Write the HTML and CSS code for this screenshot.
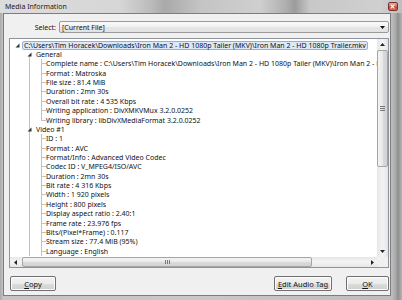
FILE: index.html
```html
<!DOCTYPE html>
<html>
<head>
<meta charset="utf-8">
<title>Media Information</title>
<link rel="stylesheet" href="styles.css">
</head>
<body>
<div class="window">
  <div class="titlebar">
    <span class="title">Media Information</span>
    <span class="close"><svg width="10" height="9" viewBox="0 0 10 9"><path d="M3 2.5 L7 6.5 M7 2.5 L3 6.5" stroke="#fff" stroke-width="1.3"/></svg></span>
  </div>
  <div class="client">
    <div class="select-row">
      <span class="select-label">Select:</span>
      <div class="combo">
        <span class="combo-text">[Current File]</span>
        <svg class="combo-arrow" width="5" height="3" viewBox="0 0 5 3"><polygon points="0,0 5,0 2.5,3" fill="#111"/></svg>
      </div>
    </div>
    <div class="panel">
      <div class="tree">
        <div class="row r0"><svg class="exp" width="5" height="5" viewBox="0 0 5 5"><polygon points="4.5,0.5 4.5,4.5 0.5,4.5" fill="#333"/></svg><span class="sel">C:\Users\Tim Horacek\Downloads\Iron Man 2 - HD 1080p Tailer (MKV)\Iron Man 2 - HD 1080p Trailer.mkv</span></div>
        <div class="row r1 first"><svg class="exp" width="5" height="5" viewBox="0 0 5 5"><polygon points="4.5,0.5 4.5,4.5 0.5,4.5" fill="#333"/></svg><span>General</span></div>
        <div class="row r2">Complete name : C:\Users\Tim Horacek\Downloads\Iron Man 2 - HD 1080p Tailer (MKV)\Iron Man 2 - HD 1080p Trailer.mkv</div>
        <div class="row r2">Format : Matroska</div>
        <div class="row r2">File size : 81.4 MiB</div>
        <div class="row r2">Duration : 2mn 30s</div>
        <div class="row r2">Overall bit rate : 4 535 Kbps</div>
        <div class="row r2">Writing application : DivXMKVMux 3.2.0.0252</div>
        <div class="row r2 last">Writing library : libDivXMediaFormat 3.2.0.0252</div>
        <div class="row r1"><svg class="exp" width="5" height="5" viewBox="0 0 5 5"><polygon points="4.5,0.5 4.5,4.5 0.5,4.5" fill="#333"/></svg><span>Video #1</span></div>
        <div class="row r2">ID : 1</div>
        <div class="row r2">Format : AVC</div>
        <div class="row r2">Format/Info : Advanced Video Codec</div>
        <div class="row r2">Codec ID : V_MPEG4/ISO/AVC</div>
        <div class="row r2">Duration : 2mn 30s</div>
        <div class="row r2">Bit rate : 4 316 Kbps</div>
        <div class="row r2">Width : 1 920 pixels</div>
        <div class="row r2">Height : 800 pixels</div>
        <div class="row r2">Display aspect ratio : 2.40:1</div>
        <div class="row r2">Frame rate : 23.976 fps</div>
        <div class="row r2">Bits/(Pixel*Frame) : 0.117</div>
        <div class="row r2">Stream size : 77.4 MiB (95%)</div>
        <div class="row r2">Language : English</div>
      </div>
      <div class="vscroll">
        <div class="sb-btn"><svg width="5" height="3" viewBox="0 0 5 3"><polygon points="2.5,0 5,3 0,3" fill="#222"/></svg></div>
        <div class="vtrack">
          <div class="vthumb"><svg width="5" height="5" viewBox="0 0 5 5"><path d="M0 0.5H5M0 2.5H5M0 4.5H5" stroke="#777" stroke-width="1"/></svg></div>
        </div>
        <div class="sb-btn"><svg width="5" height="3" viewBox="0 0 5 3"><polygon points="0,0 5,0 2.5,3" fill="#222"/></svg></div>
      </div>
      <div class="hscroll">
        <div class="sb-btn"><svg width="3" height="5" viewBox="0 0 3 5"><polygon points="0,2.5 3,0 3,5" fill="#222"/></svg></div>
        <div class="htrack">
          <div class="hthumb"><svg width="5" height="4" viewBox="0 0 5 4"><path d="M0.5 0V4M2.5 0V4M4.5 0V4" stroke="#777" stroke-width="1"/></svg></div>
        </div>
        <div class="sb-btn"><svg width="3" height="5" viewBox="0 0 3 5"><polygon points="0,0 3,2.5 0,5" fill="#222"/></svg></div>
      </div>
      <div class="corner"></div>
    </div>
    <div class="buttons">
      <button class="btn btn-copy"><u>C</u>opy</button>
      <span class="spacer"></span>
      <button class="btn btn-edit"><u>E</u>dit Audio Tag</button>
      <button class="btn btn-ok"><u>O</u>K</button>
    </div>
  </div>
</div>
</body>
</html>
```
FILE: styles.css
```css
* { box-sizing: border-box; }
html, body { margin: 0; padding: 0; }
body {
  width: 402px;
  height: 300px;
  overflow: hidden;
  font-family: "Noto Sans", "Open Sans", sans-serif;
  font-size: 7px;
  color: #111;
}
.window {
  width: 402px;
  height: 300px;
  display: flex;
  flex-direction: column;
  background: linear-gradient(90deg, #a9a9a9 0, #c4c4c4 3px, #c8c8c8 50%, #bdbdbd 392px, #a6a6a6 396px, #8e8e8e 398px, #b4b4b4 402px);
}
.titlebar {
  height: 13px;
  flex: none;
  display: flex;
  align-items: center;
  padding-left: 5px;
  background: linear-gradient(90deg, #dcdcdc 0, #d6d6d6 120px, #bcbcbc 150px, #a9a9a9 165px, #c4c4c4 200px, #cfcfcf 260px, #b0b0b0 285px, #9c9c9c 295px, #c8c8c8 310px, #d0d0d0 380px, #bdbdbd 402px);
}
.title {
  flex: 1;
  color: #1a1a1a;
  font-size: 7px;
}
.close {
  width: 10px;
  height: 9px;
  margin-right: 4px;
  border: 1px solid #7a3030;
  border-radius: 2px;
  background: linear-gradient(#e8a999, #d1664f 50%, #c0392b 51%, #d0705a);
  display: flex;
}
.close svg { display: block; margin: -1px 0 0 -1px; }
.client {
  flex: 1;
  margin: 0 11px 4px 3px;
  border: 1px solid #7d7d7d;
  background: #f0f0f0;
  padding: 0 1px 0 5px;
  display: flex;
  flex-direction: column;
}
.select-row {
  margin-top: 7px;
  height: 12px;
  display: flex;
  align-items: center;
  gap: 3px;
}
.select-label {
  width: 47px;
  text-align: right;
}
.combo {
  flex: 1;
  height: 12px;
  border: 1px solid #9a9a9a;
  border-radius: 2px;
  background: linear-gradient(#fafafa, #f0f0f0 50%, #e6e6e6 51%, #e2e2e2);
  display: flex;
  align-items: center;
  padding: 0 3px 0 2px;
}
.combo-text { flex: 1; }
.combo-arrow { display: block; }
.panel {
  margin-top: 5px;
  height: 230px;
  border: 1px solid #8e949c;
  background: #fff;
  display: grid;
  grid-template-columns: 1fr 11px;
  grid-template-rows: 1fr 10px;
}
.tree {
  overflow: hidden;
  padding-top: 1.5px;
  min-width: 0;
}
.row {
  height: 9.36px;
  display: flex;
  align-items: center;
  white-space: nowrap;
  --ln: #c2c2c2;
}
.exp { display: block; flex: none; }
.r0 { padding-left: 5px; }
.r0 .exp { margin-right: 2px; }
.sel {
  background: #dde9f8;
  border: 1px solid #8fb1dc;
  border-radius: 2px;
  padding: 0 1px;
  line-height: 7px;
}
.r1 {
  padding-left: 17px;
  background: linear-gradient(var(--ln), var(--ln)) 19px 0 / 1px 100% no-repeat;
}
.r1.first {
  background: linear-gradient(var(--ln), var(--ln)) 19px 100% / 1px 50% no-repeat;
}
.r1 .exp { margin-right: 4px; }
.r2 {
  padding-left: 36px;
  background:
    linear-gradient(var(--ln), var(--ln)) 19px 0 / 1px 100% no-repeat,
    linear-gradient(var(--ln), var(--ln)) 31px 0 / 1px 100% no-repeat,
    linear-gradient(var(--ln), var(--ln)) 31px 50% / 5px 1px no-repeat;
}
.r2.last {
  background:
    linear-gradient(var(--ln), var(--ln)) 19px 0 / 1px 100% no-repeat,
    linear-gradient(var(--ln), var(--ln)) 31px 0 / 1px 50% no-repeat,
    linear-gradient(var(--ln), var(--ln)) 31px 50% / 5px 1px no-repeat;
}
.vscroll {
  display: flex;
  flex-direction: column;
  background: linear-gradient(90deg, #e6e6e6, #f2f2f2 40%, #f2f2f2 60%, #e4e4e4);
}
.hscroll {
  display: flex;
  background: linear-gradient(#e6e6e6, #f2f2f2 40%, #f2f2f2 60%, #e4e4e4);
}
.sb-btn {
  flex: none;
  width: 10px;
  height: 10px;
  display: flex;
  align-items: center;
  justify-content: center;
}
.vscroll .sb-btn { width: 11px; height: 11px; }
.vtrack { flex: 1; }
.vthumb {
  height: 117px;
  border: 1px solid #a4a4a4;
  border-radius: 2px;
  background: linear-gradient(90deg, #f4f4f4, #e9e9e9 50%, #dadada 51%, #d2d2d2);
  display: flex;
  align-items: center;
  justify-content: center;
}
.vthumb svg, .hthumb svg { display: block; }
.htrack { flex: 1; padding-left: 2px; }
.hthumb {
  width: 290px;
  height: 10px;
  border: 1px solid #a4a4a4;
  border-radius: 2px;
  background: linear-gradient(#f4f4f4, #e9e9e9 50%, #dadada 51%, #d2d2d2);
  display: flex;
  align-items: center;
  justify-content: center;
}
.corner { background: #f0f0f0; }
.buttons {
  margin-top: 8px;
  height: 15px;
  display: flex;
  padding-left: 1px;
  gap: 14px;
}
.spacer { flex: 1; }
.btn {
  height: 15px;
  padding: 0;
  border: 1px solid #707070;
  border-radius: 2px;
  background: linear-gradient(#f3f3f3, #ebebeb 50%, #dddddd 51%, #cfcfcf);
  box-shadow: inset 0 0 0 1px #fcfcfc;
  font-family: "Noto Sans", "Open Sans", sans-serif;
  font-size: 7.5px;
  color: #111;
  text-align: center;
}
.btn-copy { width: 46px; }
.btn-edit { width: 58px; }
.btn-ok { width: 43px; }
.buttons .spacer + .btn { margin-left: -14px; }
```
